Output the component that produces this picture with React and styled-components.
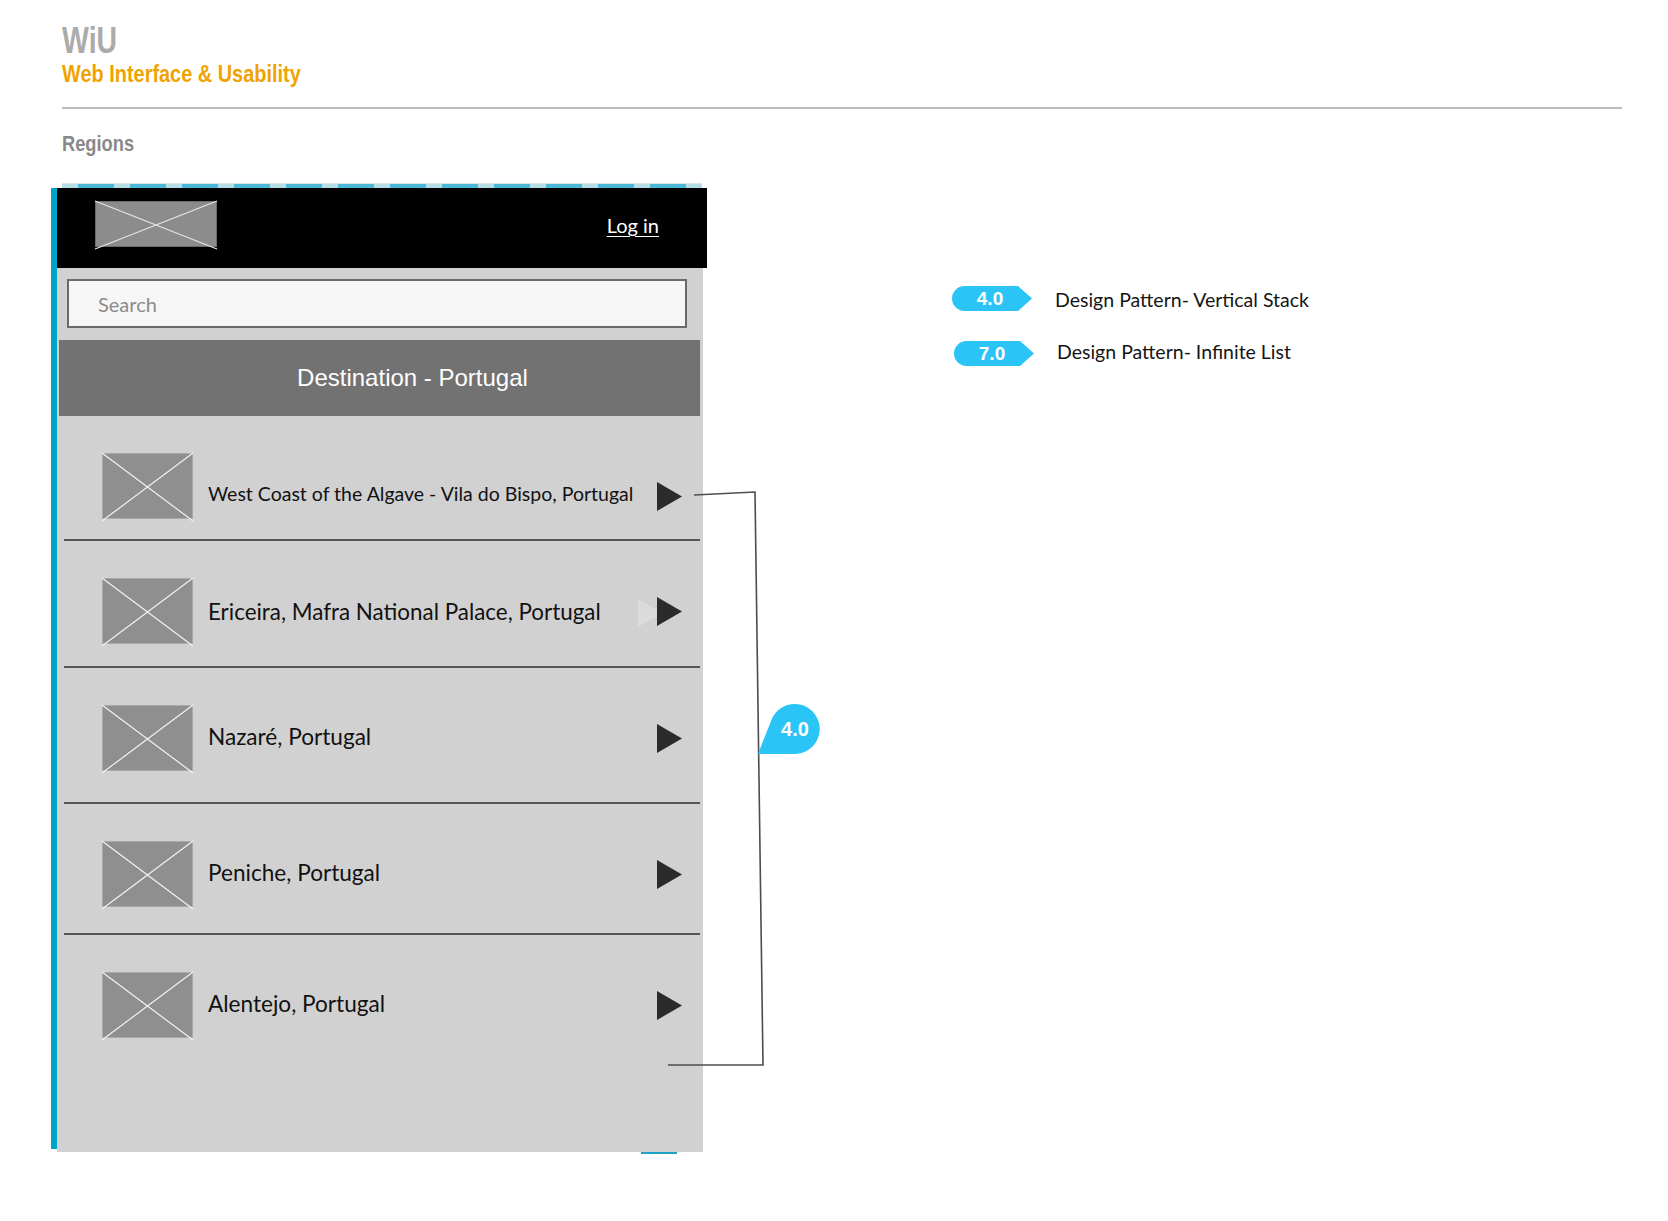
import React from "react";
import styled, { createGlobalStyle } from "styled-components";

const GlobalStyle = createGlobalStyle`
  html, body { margin: 0; padding: 0; background: #ffffff; }
  body { font-family: "Liberation Sans", Arial, sans-serif; }
  * { box-sizing: border-box; }
`;

const Page = styled.div`
  width: 1668px;
  min-height: 1221px;
  background: #ffffff;
  overflow: hidden;
`;

const Masthead = styled.header`
  padding: 22px 0 0 62px;
`;

const Condensed = styled.div`
  font-family: "Liberation Sans", Arial, sans-serif;
  font-weight: 700;
  white-space: nowrap;
  transform-origin: left center;
`;

const Brand = styled(Condensed)`
  font-size: 37px;
  line-height: 38px;
  height: 38px;
  color: #ababab;
  transform: scaleX(0.77);
`;

const Tagline = styled(Condensed)`
  margin-top: 2px;
  font-size: 24px;
  line-height: 24px;
  height: 24px;
  color: #f0a300;
  transform: scaleX(0.83);
`;

const Rule = styled.hr`
  margin: 21px 0 0 0;
  width: 1560px;
  height: 2px;
  border: none;
  background: #bcbcbc;
`;

const SectionTitle = styled(Condensed)`
  margin-top: 24px;
  font-size: 22px;
  line-height: 22px;
  height: 22px;
  color: #898989;
  transform: scaleX(0.83);
`;

const Main = styled.main`
  display: flex;
  align-items: flex-start;
  padding-left: 51px;
  margin-top: 28px;
`;

const Mockup = styled.div`
  position: relative;
  width: 656px;
  display: flex;
  flex-direction: column;
`;

const DashStrip = styled.div`
  margin-left: 11px;
  width: 640px;
  height: 5px;
  border-top: 1px solid #d9e6ea;
  background: repeating-linear-gradient(
    90deg,
    #b6dce6 0px,
    #b6dce6 16px,
    #4bb8d5 16px,
    #4bb8d5 52px
  );
`;

const Frame = styled.div`
  display: flex;
  align-items: stretch;
`;

const BlueBar = styled.div`
  width: 6px;
  margin-bottom: 3px;
  background: #00a3c9;
`;

const Screen = styled.div`
  width: 650px;
  display: flex;
  flex-direction: column;
`;

const TopBar = styled.div`
  height: 80px;
  background: #000000;
  display: flex;
  align-items: center;
  justify-content: space-between;
  padding: 0 48px 0 38px;
`;

const LogoSlot = styled.span`
  display: flex;
  margin-top: -8px;
`;

const LoginLink = styled.a`
  font-family: Lato, "Open Sans", sans-serif;
  font-size: 20px;
  color: #ffffff;
  text-decoration: underline;
  text-underline-offset: 3px;
  text-decoration-thickness: 1px;
  margin-top: -6px;
`;

const Panel = styled.div`
  width: 646px;
  height: 884px;
  background: #d1d1d1;
  padding-top: 11px;
  display: flex;
  flex-direction: column;
`;

const SearchBox = styled.div`
  margin-left: 10px;
  width: 620px;
  height: 49px;
  border: 2px solid #6a6a6a;
  background: #f7f6f6;
  display: flex;
  align-items: center;
  padding-left: 29px;
  font-family: Lato, "Open Sans", sans-serif;
  font-size: 20px;
  color: #8b8b8b;
`;

const DestinationBar = styled.div`
  margin: 12px 3px 0 2px;
  height: 76px;
  background: #727272;
  display: flex;
  align-items: center;
  justify-content: center;
  padding-left: 66px;
  color: #ffffff;
  font-family: "Liberation Sans", Arial, sans-serif;
  font-size: 24px;
`;

const Item = styled.div`
  height: ${(p) => p.$h}px;
  padding: 37px 21px 0 45px;
`;

const ItemRow = styled.div`
  height: 66px;
  display: flex;
  align-items: center;
`;

const ItemLabel = styled.span`
  margin-left: 15px;
  margin-top: ${(p) => p.$drop || 0}px;
  font-family: Lato, "Open Sans", sans-serif;
  font-size: ${(p) => p.$size}px;
  color: #111111;
  white-space: nowrap;
`;

const ArrowWrap = styled.span`
  margin-left: auto;
  display: flex;
  padding-top: ${(p) => p.$drop || 0}px;
`;

const Divider = styled.div`
  margin: 0 3px 0 7px;
  height: 2px;
  background: #555555;
`;

const BottomTick = styled.div`
  margin-left: 590px;
  width: 36px;
  height: 2px;
  background: #1ea3c6;
`;

const Overlay = styled.svg`
  position: absolute;
  left: 0;
  top: 0;
  overflow: visible;
  pointer-events: none;
`;

const Bubble = styled.div`
  position: absolute;
  left: 706px;
  top: 520px;
  width: 64px;
  height: 52px;
`;

const BubbleLabel = styled.span`
  position: absolute;
  left: 13px;
  top: 0;
  width: 50px;
  height: 52px;
  display: flex;
  align-items: center;
  justify-content: center;
  font-family: "Liberation Sans", Arial, sans-serif;
  font-weight: 700;
  font-size: 20px;
  color: #ffffff;
`;

const Legend = styled.aside`
  margin-left: 245px;
  margin-top: 103px;
  display: flex;
  flex-direction: column;
  gap: 30px;
`;

const LegendRow = styled.div`
  display: flex;
  align-items: center;
  gap: 23px;
  margin-left: ${(p) => p.$shift || 0}px;
`;

const Tag = styled.div`
  position: relative;
  width: 80px;
  height: 25px;
  flex: none;
`;

const TagLabel = styled.span`
  position: absolute;
  left: 0;
  top: 0;
  width: 76px;
  height: 25px;
  display: flex;
  align-items: center;
  justify-content: center;
  font-family: "Liberation Sans", Arial, sans-serif;
  font-weight: 700;
  font-size: 19px;
  color: #ffffff;
`;

const LegendText = styled.span`
  font-family: Lato, "Open Sans", sans-serif;
  font-size: 19.5px;
  color: #151515;
  margin-top: ${(p) => p.$lift || 2}px;
`;

const Placeholder = ({ w, h, fill, stroke, line }) => (
  <svg width={w} height={h} viewBox={`0 0 ${w} ${h}`} style={{ overflow: "visible", display: "block" }}>
    <rect x="0.5" y="0.5" width={w - 1} height={h - 1} fill={fill} stroke={stroke} strokeWidth="1" />
    <line x1="0" y1="0" x2={w} y2={h + 2} stroke={line} strokeWidth="1.2" />
    <line x1={w} y1="0" x2="0" y2={h + 2} stroke={line} strokeWidth="1.2" />
  </svg>
);

const Arrow = ({ ghost }) =>
  ghost ? (
    <svg width="44" height="29" viewBox="0 0 44 29">
      <polygon points="0,2 25,16 0,30" fill="#dbdbdb" />
      <polygon points="19,0 44,14.5 19,29" fill="#2b2b2b" />
    </svg>
  ) : (
    <svg width="25" height="29" viewBox="0 0 25 29">
      <polygon points="0,0 25,14.5 0,29" fill="#2b2b2b" />
    </svg>
  );

const TagShape = () => (
  <svg width="80" height="25" viewBox="0 0 80 25" style={{ display: "block" }}>
    <path d="M12.5 0 H66 L80 12.5 L66 25 H12.5 A12.5 12.5 0 0 1 12.5 0 Z" fill="#2bc4f6" />
  </svg>
);

const items = [
  { label: "West Coast of the Algave - Vila do Bispo, Portugal", h: 123, size: 19.5, drop: 15, arrowDrop: 20 },
  { label: "Ericeira, Mafra National Palace, Portugal", h: 125, size: 22.4, ghost: true },
  { label: "Nazaré, Portugal", h: 134, size: 22.6, drop: -4 },
  { label: "Peniche, Portugal", h: 129, size: 22.6, drop: -4 },
  { label: "Alentejo, Portugal", h: 217, size: 22.6, drop: -4 },
];

export default function App() {
  return (
    <Page>
      <GlobalStyle />
      <Masthead>
        <Brand>WiU</Brand>
        <Tagline>Web Interface &amp; Usability</Tagline>
        <Rule />
        <SectionTitle>Regions</SectionTitle>
      </Masthead>
      <Main>
        <Mockup>
          <DashStrip />
          <Frame>
            <BlueBar />
            <Screen>
              <TopBar>
                <LogoSlot>
                  <Placeholder w={122} h={46} fill="#8c8c8c" stroke="#6c6c6c" line="#e6e6e6" />
                </LogoSlot>
                <LoginLink>Log in</LoginLink>
              </TopBar>
              <Panel>
                <SearchBox>Search</SearchBox>
                <DestinationBar>Destination - Portugal</DestinationBar>
                {items.map((it, i) => (
                  <React.Fragment key={it.label}>
                    <Item $h={it.h}>
                      <ItemRow>
                        <Placeholder w={91} h={66} fill="#8f8f8f" stroke="#a9a9a9" line="#f2f2f2" />
                        <ItemLabel $size={it.size} $drop={it.drop}>{it.label}</ItemLabel>
                        <ArrowWrap $drop={it.arrowDrop}>
                          <Arrow ghost={it.ghost} />
                        </ArrowWrap>
                      </ItemRow>
                    </Item>
                    {i < items.length - 1 && <Divider />}
                  </React.Fragment>
                ))}
              </Panel>
            </Screen>
          </Frame>
          <BottomTick />
          <Overlay width="800" height="1000">
            <polyline
              points="643,312 704,309 712,882 617,882"
              fill="none"
              stroke="#4d4d4d"
              strokeWidth="1.6"
            />
          </Overlay>
          <Bubble>
            <svg width="64" height="52" viewBox="0 0 64 52" style={{ position: "absolute", left: 0, top: 0 }}>
              <path d="M1 51 L14 18 A25 25 0 1 1 38 51 Z" fill="#2bc4f6" />
            </svg>
            <BubbleLabel>4.0</BubbleLabel>
          </Bubble>
        </Mockup>
        <Legend>
          <LegendRow>
            <Tag>
              <TagShape />
              <TagLabel>4.0</TagLabel>
            </Tag>
            <LegendText>Design Pattern- Vertical Stack</LegendText>
          </LegendRow>
          <LegendRow $shift={2}>
            <Tag>
              <TagShape />
              <TagLabel>7.0</TagLabel>
            </Tag>
            <LegendText $lift={-5}>Design Pattern- Infinite List</LegendText>
          </LegendRow>
        </Legend>
      </Main>
    </Page>
  );
}
